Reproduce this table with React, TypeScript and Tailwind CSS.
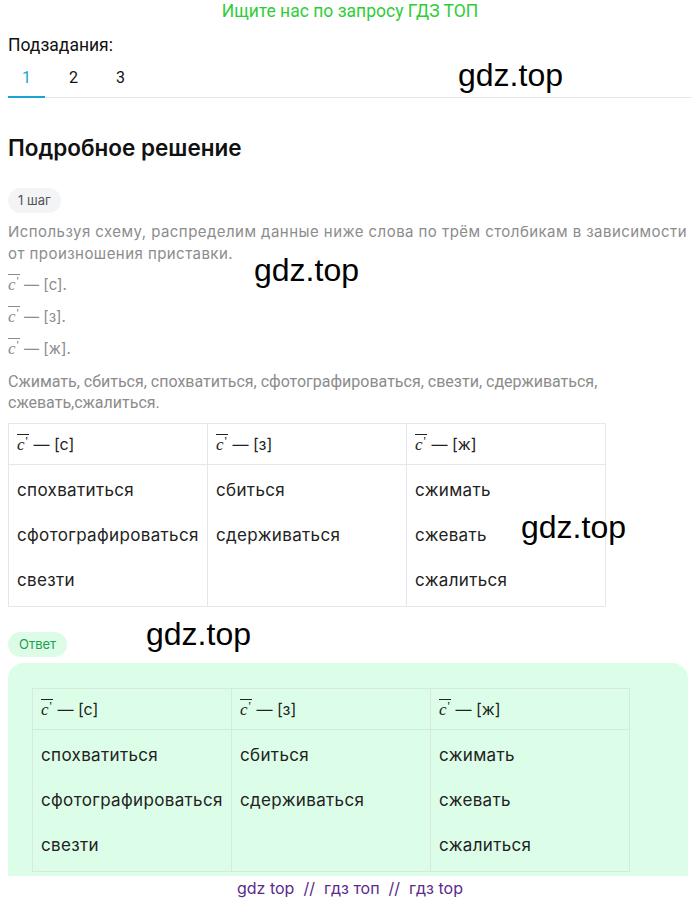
import React from "react";

const font = { fontFamily: "Inter, 'Noto Sans', sans-serif" };

function Cprime() {
  return (
    <span className="inline-block font-['Liberation_Serif',serif] text-[17px] italic leading-none">
      <span className="inline-block border-t border-current pr-[1px] pt-[1px]">
        c<span className="relative -top-[5px] ml-[1px] text-[13px] not-italic">'</span>
      </span>
    </span>
  );
}

function Formula({ sound, dot }: { sound: string; dot?: boolean }) {
  return (
    <span>
      <Cprime /> — [{sound}]{dot ? "." : ""}
    </span>
  );
}

const columns = [
  { sound: "с", words: ["спохватиться", "сфотографироваться", "свезти"] },
  { sound: "з", words: ["сбиться", "сдерживаться"] },
  { sound: "ж", words: ["сжимать", "сжевать", "сжалиться"] },
];

function WordTable({ border }: { border: string }) {
  return (
    <table className="border-collapse text-[17px] tracking-[0.02em] text-[#222]">
      <thead>
        <tr>
          {columns.map((c) => (
            <th
              key={c.sound}
              className={`h-[41px] w-[199px] border ${border} px-[8px] text-left align-middle text-[16px] font-normal tracking-normal`}
            >
              <Formula sound={c.sound} />
            </th>
          ))}
        </tr>
      </thead>
      <tbody>
        <tr>
          {columns.map((c) => (
            <td
              key={c.sound}
              className={`border ${border} px-[8px] pt-[11px] pb-[12px] align-top`}
            >
              <div className="flex flex-col gap-[17px]">
                {c.words.map((w) => (
                  <div key={w} className="leading-[28px]">
                    {w}
                  </div>
                ))}
              </div>
            </td>
          ))}
        </tr>
      </tbody>
    </table>
  );
}

function Watermark({ className }: { className: string }) {
  return (
    <div
      className={`pointer-events-none absolute font-['Liberation_Sans',sans-serif] text-[32px] leading-none text-black ${className}`}
    >
      gdz.top
    </div>
  );
}

export default function App() {
  return (
    <div className="relative w-[700px] bg-white" style={font}>
      <div className="pt-[1px] text-center font-['Roboto',sans-serif] text-[17.5px] leading-[21px] text-[#2fcc38]">
        Ищите нас по запросу ГДЗ ТОП
      </div>

      <div className="px-2">
        <div className="mt-[13px] font-['Roboto',sans-serif] text-[17.5px] leading-[21px] text-[#111]">
          Подзадания:
        </div>
        <div className="mt-[10px] flex gap-[10px] border-b border-[#e5e7eb] font-['Roboto',sans-serif]">
          {["1", "2", "3"].map((n, i) => (
            <div
              key={n}
              className={`-mb-[1px] w-[37px] pb-[8px] pt-[2px] text-center text-[16px] leading-[20px] ${
                i === 0 ? "border-b-2 border-[#1ba3d6] text-[#1ba3d6]" : "border-b-2 border-transparent text-[#111]"
              }`}
            >
              {n}
            </div>
          ))}
        </div>

        <h2 className="mt-[36px] text-[22.5px] font-semibold leading-[28px] text-[#111]">
          Подробное решение
        </h2>

        <div className="mt-[26px] inline-block rounded-full bg-[#f3f4f6] px-[10px] py-[4px] text-[13px] leading-[17px] text-[#555]">
          1 шаг
        </div>

        <div className="mt-[8px] text-[15px] leading-[22px] text-[#8c8c8c]">
          <p className="w-[692px] tracking-[0.03em]">
            Используя схему, распределим данные ниже слова по трём столбикам в зависимости от
            произношения приставки.
          </p>
          <div className="mt-[9px] flex flex-col gap-[10px] leading-[22px]">
            <Formula sound="с" dot />
            <Formula sound="з" dot />
            <Formula sound="ж" dot />
          </div>
          <p className="mt-[11px] font-['Roboto',sans-serif] text-[16px] leading-[21px]">
            Сжимать, сбиться, спохватиться, сфотографироваться, свезти, сдерживаться,
            сжевать,сжалиться.
          </p>
        </div>

        <div className="mt-[10px]">
          <WordTable border="border-[#e5e7eb]" />
        </div>

        <div className="mt-[25px] inline-block rounded-full bg-[#dcfce7] px-[11px] py-[4px] text-[13px] leading-[17px] text-[#1e9e50]">
          Ответ
        </div>

        <div className="mt-[6px] h-[213px] w-[680px] overflow-hidden rounded-t-[16px] bg-[#dcfde8] px-[24px] pt-[25px]">
          <WordTable border="border-[#d6e9dc]" />
        </div>
      </div>

      <div className="pt-[2px] text-center text-[16px] leading-[20px] text-[#5b2a8c]">
        gdz top &nbsp;//&nbsp; гдз топ &nbsp;//&nbsp; гдз top
      </div>

      <Watermark className="left-[458px] top-[59px]" />
      <Watermark className="left-[254px] top-[254px]" />
      <Watermark className="left-[521px] top-[511px]" />
      <Watermark className="left-[146px] top-[618px]" />
    </div>
  );
}
